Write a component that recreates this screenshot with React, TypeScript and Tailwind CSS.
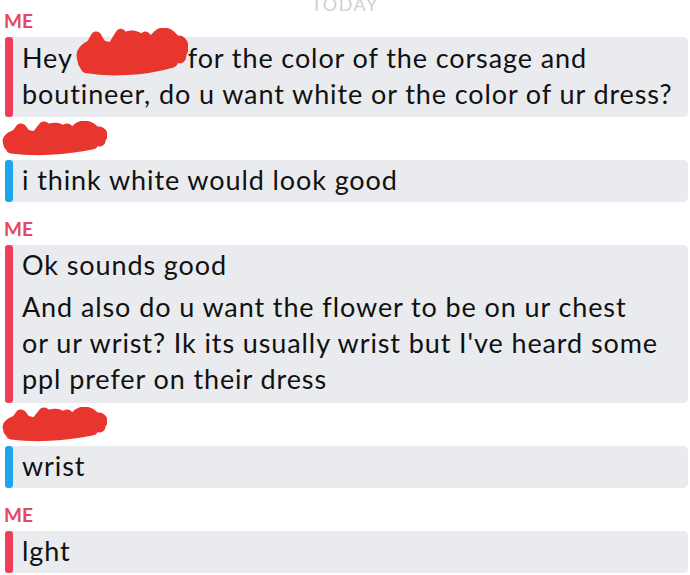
import React from 'react'

const font = { fontFamily: 'Lato, "Noto Sans", sans-serif' }

// red marker scribble used to hide names
const Scribble = ({ w, h }: { w: number; h: number }) => (
    <svg width={w} height={h} viewBox="0 0 100 36" preserveAspectRatio="none">
        <g fill="none" stroke="#e8362f" strokeLinecap="round" strokeLinejoin="round">
            <path d="M9 20 C 20 10, 30 26, 42 14 S 62 24, 72 12 S 88 20, 92 14" strokeWidth="17" />
            <path d="M7 24 L 18 8 L 28 22 L 40 6 L 50 24 L 62 8 L 72 24 L 84 7 L 93 20" strokeWidth="11" />
            <path d="M9 27 C 30 30, 60 29, 86 23" strokeWidth="11" />
        </g>
    </svg>
)

const Label = ({ children }: { children: React.ReactNode }) => (
    <div className="h-[43px] flex items-end pb-[8px] pl-[4px]">
        <span className="text-[19px] leading-[16px] font-bold text-[#e5475f]">{children}</span>
    </div>
)

const NameLabel = () => (
    <div className="h-[43px] flex items-end pl-[2px] pb-[3px]">
        <Scribble w={105} h={36} />
    </div>
)

const Bubble = ({ color, children }: { color: string; children: React.ReactNode }) => (
    <div className="flex ml-[5px] mr-[2px]">
        <div className={`w-[8px] rounded-[3px] shrink-0 ${color}`} />
        <div className="flex-1 bg-[#e9ebee] rounded-r-[5px] pt-[2px] pb-[4px] pl-[9px] pr-2 text-[27px] leading-[36px] tracking-[0.9px] text-[#111111]">
            {children}
        </div>
    </div>
)

export default function App() {
    return (
        <div className="w-[690px] h-[575px] overflow-hidden bg-white" style={font}>
            <div className="h-[13px] flex justify-center items-end">
                <span className="text-[18px] leading-[18px] tracking-[1.5px] text-[#cdd0d5]">TODAY</span>
            </div>
            <div className="h-[24px] flex items-end pb-[8px] pl-[4px]">
                <span className="text-[19px] leading-[16px] font-bold text-[#e5475f]">ME</span>
            </div>
            <div className="flex ml-[5px] mr-[2px]">
                <div className="w-[8px] rounded-[3px] shrink-0 bg-[#ee3e5a]" />
                <div className="flex-1 bg-[#e9ebee] rounded-r-[5px] pt-[3px] pb-[5px] pl-[9px] pr-2 text-[27px] leading-[36px] tracking-[0.9px] text-[#111111]">
                    <p>
                        Hey
                        <span className="relative inline-block w-[115px] h-[20px]">
                            <span className="absolute left-[3px] top-[-20px]">
                                <Scribble w={112} h={50} />
                            </span>
                        </span>
                        for the color of the corsage and
                    </p>
                    <p>boutineer, do u want white or the color of ur dress?</p>
                </div>
            </div>
            <NameLabel />
            <Bubble color="bg-[#1fa4ef]">
                <p>i think white would look good</p>
            </Bubble>
            <Label>ME</Label>
            <Bubble color="bg-[#ee3e5a]">
                <div className="flex flex-col gap-[6px] pb-[2px]">
                    <p>Ok sounds good</p>
                    <p>
                        And also do u want the flower to be on ur chest<br />
                        or ur wrist? Ik its usually wrist but I've heard some<br />
                        ppl prefer on their dress
                    </p>
                </div>
            </Bubble>
            <NameLabel />
            <Bubble color="bg-[#1fa4ef]">
                <p>wrist</p>
            </Bubble>
            <Label>ME</Label>
            <Bubble color="bg-[#ee3e5a]">
                <p>lght</p>
            </Bubble>
        </div>
    )
}
